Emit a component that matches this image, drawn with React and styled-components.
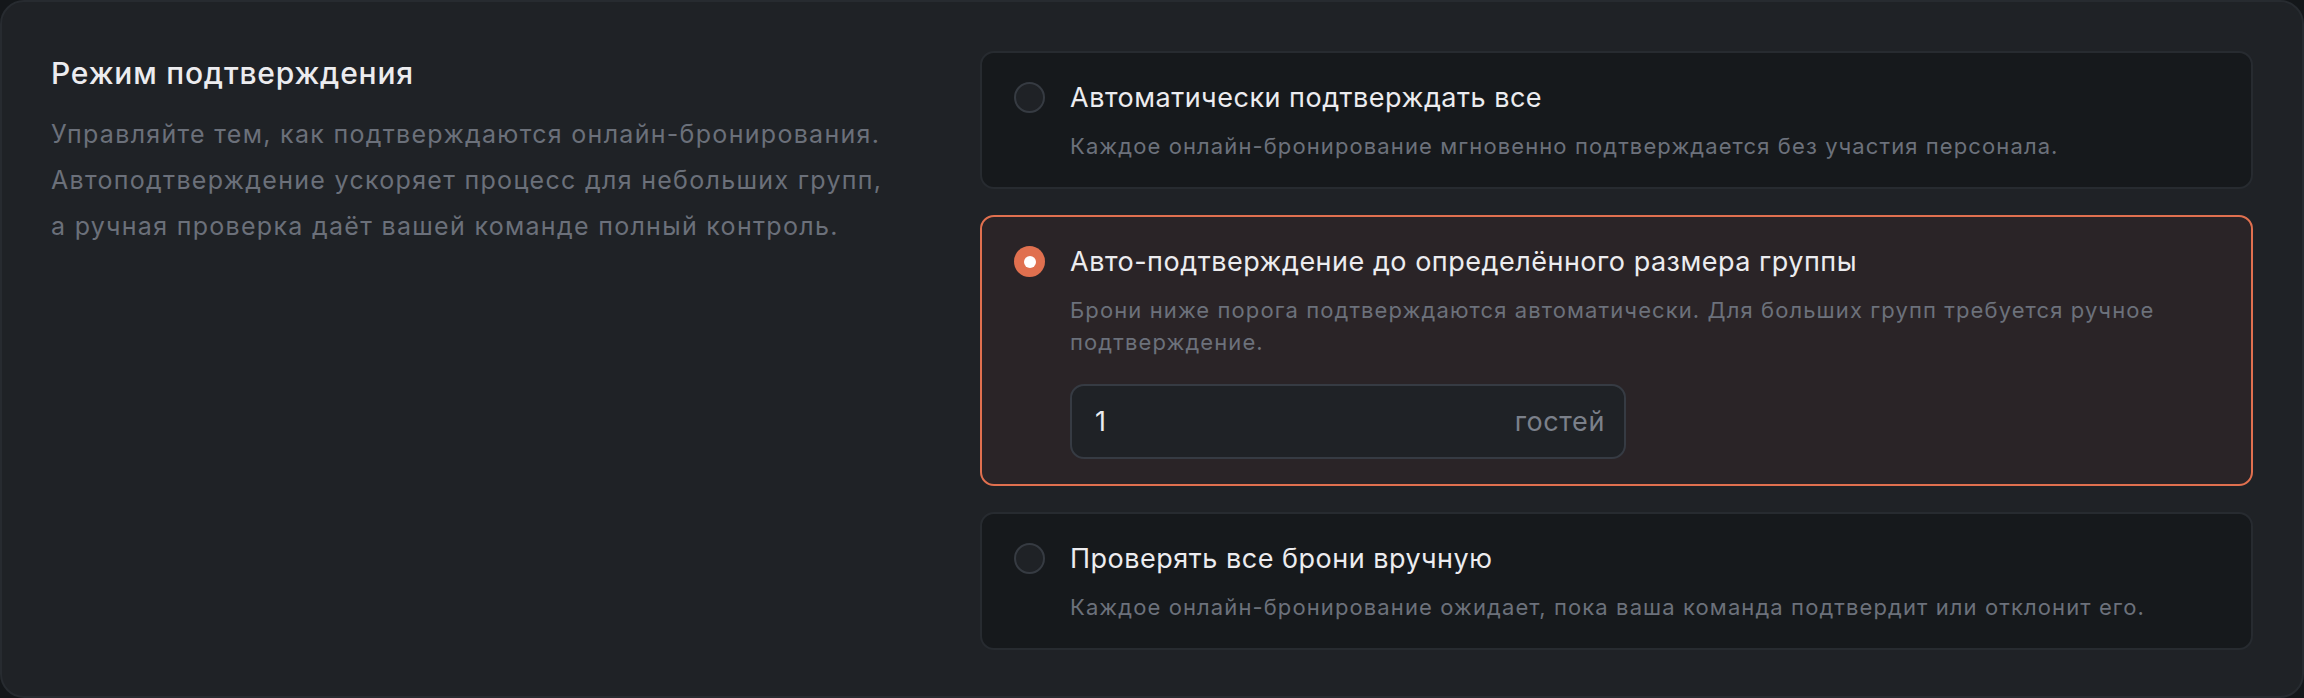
import React from "react";
import styled, { createGlobalStyle } from "styled-components";

const Global = createGlobalStyle`
  html, body { margin: 0; padding: 0; background: #14171a; }
  body { font-family: Inter, "Noto Sans", sans-serif; -webkit-font-smoothing: antialiased; }
  * { box-sizing: border-box; }
`;

const Panel = styled.section`
  height: 698px;
  background: #1f2226;
  border: 2px solid #272b30;
  border-radius: 24px;
  padding: 49px 49px 49px 49px;
  display: grid;
  grid-template-columns: 881px 1fr;
  column-gap: 48px;
  align-items: start;
`;

const Intro = styled.div`
  display: flex;
  flex-direction: column;
  gap: 20px;
  padding-top: 4px;
`;

const Heading = styled.h2`
  margin: 0;
  font-size: 30px;
  line-height: 36px;
  font-weight: 500;
  letter-spacing: 0.8px;
  color: #ececef;
`;

const Lead = styled.p`
  margin: 0;
  max-width: 845px;
  font-size: 25px;
  line-height: 46px;
  letter-spacing: 1.3px;
  color: #6b707a;
`;

const Options = styled.div`
  display: flex;
  flex-direction: column;
  gap: 26px;
`;

const Option = styled.label`
  display: grid;
  grid-template-columns: 31px 1fr;
  column-gap: 25px;
  padding: 29px 31px 25px 32px;
  border-radius: 14px;
  border: 2px solid ${(p) => (p.$active ? "#e0704f" : "#272b30")};
  background: ${(p) => (p.$active ? "#2a2427" : "#16191c")};
  cursor: pointer;
`;

const Radio = styled.span`
  width: 31px;
  height: 31px;
  border-radius: 50%;
  display: flex;
  align-items: center;
  justify-content: center;
  background: ${(p) => (p.$active ? "#e0704f" : "#1f2226")};
  border: ${(p) => (p.$active ? "none" : "2px solid #363b42")};
  &::after {
    content: "";
    display: ${(p) => (p.$active ? "block" : "none")};
    width: 12px;
    height: 12px;
    border-radius: 50%;
    background: #ffffff;
  }
`;

const Body = styled.div`
  display: flex;
  flex-direction: column;
  gap: 16px;
`;

const OptionTitle = styled.div`
  font-size: 27px;
  line-height: 32px;
  font-weight: 400;
  letter-spacing: 0.5px;
  color: #ececef;
`;

const OptionText = styled.div`
  font-size: 22px;
  line-height: 32px;
  letter-spacing: 1.1px;
  color: #6c717b;
`;

const Field = styled.div`
  margin-top: 10px;
  width: 556px;
  height: 75px;
  border: 2px solid #363b43;
  border-radius: 14px;
  background: #1f2226;
  display: flex;
  align-items: center;
  justify-content: space-between;
  padding: 0 19px 0 23px;
  font-size: 27px;
  letter-spacing: 0.6px;
`;

const Value = styled.span`
  color: #ececef;
`;

const Unit = styled.span`
  color: #7b808a;
`;

const options = [
  {
    title: "Автоматически подтверждать все",
    text: "Каждое онлайн-бронирование мгновенно подтверждается без участия персонала.",
  },
  {
    title: "Авто-подтверждение до определённого размера группы",
    text: "Брони ниже порога подтверждаются автоматически. Для больших групп требуется ручное подтверждение.",
    active: true,
    field: true,
  },
  {
    title: "Проверять все брони вручную",
    text: "Каждое онлайн-бронирование ожидает, пока ваша команда подтвердит или отклонит его.",
  },
];

export default function App() {
  return (
    <>
      <Global />
      <Panel>
        <Intro>
          <Heading>Режим подтверждения</Heading>
          <Lead>
            Управляйте тем, как подтверждаются онлайн-бронирования.
            Автоподтверждение ускоряет процесс для небольших групп, а ручная
            проверка даёт вашей команде полный контроль.
          </Lead>
        </Intro>
        <Options>
          {options.map((o) => (
            <Option key={o.title} $active={o.active}>
              <Radio $active={o.active} />
              <Body>
                <OptionTitle>{o.title}</OptionTitle>
                <OptionText>{o.text}</OptionText>
                {o.field && (
                  <Field>
                    <Value>1</Value>
                    <Unit>гостей</Unit>
                  </Field>
                )}
              </Body>
            </Option>
          ))}
        </Options>
      </Panel>
    </>
  );
}
